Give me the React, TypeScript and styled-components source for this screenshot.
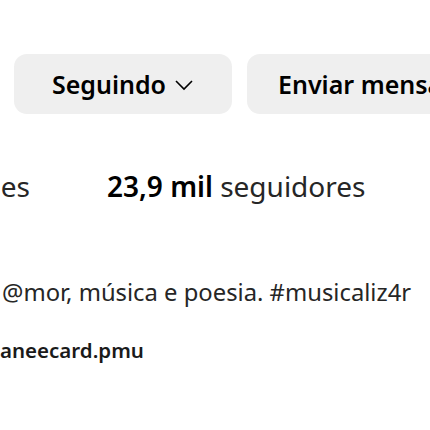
import React from "react";
import styled, { createGlobalStyle } from "styled-components";

const Global = createGlobalStyle`
  html, body { margin: 0; padding: 0; background: #ffffff; overflow: hidden; }
  body { font-family: "Noto Sans", "Open Sans", Arial, sans-serif; color: #000; }
`;

const Page = styled.div`
  width: 430px;
  height: 430px;
  overflow: hidden;
  display: flex;
  flex-direction: column;
`;

const Actions = styled.div`
  display: flex;
  gap: 15px;
  margin-top: 54px;
  padding-left: 14px;
  white-space: nowrap;
`;

const Button = styled.button<{ $pad: number; $width?: number }>`
  flex: none;
  height: 60px;
  ${(p) => (p.$width ? `width: ${p.$width}px;` : "")}
  padding: 0 ${(p) => p.$pad}px;
  border: none;
  border-radius: 13px;
  background: #efefef;
  display: flex;
  align-items: center;
  justify-content: center;
  gap: 8px;
  font-family: inherit;
  font-size: 25px;
  font-weight: 600;
  color: #000;
`;

const Chevron = styled.svg`
  width: 20px;
  height: 12px;
  margin-top: 2px;
`;

const Stats = styled.div`
  display: flex;
  align-items: baseline;
  margin-top: 52px;
  line-height: 40px;
  white-space: nowrap;
  font-size: 28px;
`;

const Stat = styled.span<{ $lead?: boolean }>`
  flex: none;
  ${(p) =>
    p.$lead
      ? `width: 320px; margin-left: -290px; text-align: right; margin-right: 77px;`
      : ""}
  color: #262626;
`;

const Num = styled.b`
  font-weight: 600;
  color: #000;
`;

const Bio = styled.div`
  margin-top: 71px;
  padding-left: 2px;
  font-size: 23.8px;
  line-height: 30px;
  color: #262626;
  white-space: nowrap;
`;

const Link = styled.div`
  margin-top: 30px;
  font-size: 20.5px;
  line-height: 26px;
  font-weight: 600;
  color: #1a1a1a;
  white-space: nowrap;
`;

export default function App() {
  return (
    <Page>
      <Global />
      <Actions>
        <Button $pad={0} $width={218}>
          Seguindo
          <Chevron viewBox="0 0 20 12" fill="none" stroke="#000" strokeWidth="1.6">
            <path d="M2 2l8 8 8-8" />
          </Chevron>
        </Button>
        <Button $pad={31}>Enviar mensagem</Button>
      </Actions>
      <Stats>
        <Stat $lead>
          <Num>318</Num> publicações
        </Stat>
        <Stat>
          <Num>23,9 mil</Num> seguidores
        </Stat>
      </Stats>
      <Bio>@mor, música e poesia. #musicaliz4r</Bio>
      <Link>aneecard.pmu</Link>
    </Page>
  );
}
